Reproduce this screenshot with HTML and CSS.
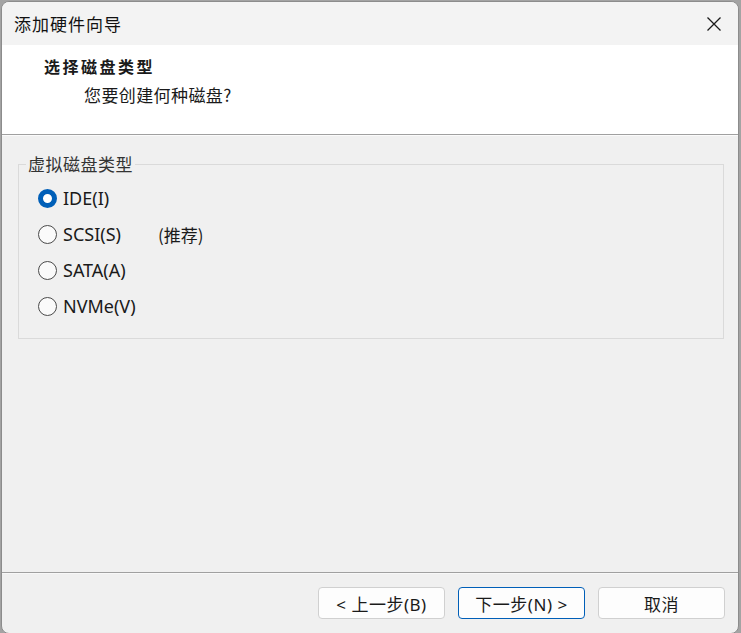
FILE: index.html
```html
<!DOCTYPE html>
<html lang="zh-CN">
<head>
    <meta charset="UTF-8">
    <title>添加硬件向导</title>
    <link rel="stylesheet" href="styles.css">
</head>
<body>
    <div class="window">
        <div class="titlebar">
            <span class="title">添加硬件向导</span>
            <span class="close">
                <svg width="16" height="16" viewBox="0 0 16 16"><path d="M1.5 1.5L14.5 14.5M14.5 1.5L1.5 14.5" stroke="#1a1a1a" stroke-width="1.3" fill="none"/></svg>
            </span>
        </div>

        <div class="header">
            <div class="head-title">选择磁盘类型</div>
            <div class="head-sub">您要创建何种磁盘?</div>
        </div>

        <div class="content">
            <fieldset class="group">
                <legend>虚拟磁盘类型</legend>
                <div class="options">
                    <label class="option"><span class="radio checked"></span>IDE(I)</label>
                    <label class="option"><span class="radio"></span>SCSI(S)<span class="hint">(推荐)</span></label>
                    <label class="option"><span class="radio"></span>SATA(A)</label>
                    <label class="option"><span class="radio"></span>NVMe(V)</label>
                </div>
            </fieldset>
        </div>

        <div class="footer">
            <button class="btn">&lt; 上一步(B)</button>
            <button class="btn default">下一步(N) &gt;</button>
            <button class="btn">取消</button>
        </div>
    </div>
</body>
</html>
```

FILE: styles.css
```css
html, body {
    margin: 0;
    height: 100%;
}

body {
    background-color: #a3a3a3;
    font-family: "Noto Sans", "Noto Sans CJK SC", sans-serif;
    color: #1a1a1a;
    padding: 1px 2px 1px 1px;
    box-sizing: border-box;
}

.window {
    height: 631px;
    border: 1px solid #8c8c8c;
    border-radius: 8px;
    overflow: hidden;
    display: flex;
    flex-direction: column;
    background-color: #f0f0f0;
}

.titlebar {
    height: 43px;
    flex: none;
    background-color: #f3f3f3;
    display: flex;
    align-items: center;
    justify-content: space-between;
    padding: 0 16px 0 12px;
}

.title {
    font-family: "Noto Sans CJK SC", sans-serif;
    font-size: 17px;
    letter-spacing: 1px;
    line-height: 22px;
    color: #111;
}

.close {
    display: flex;
}

.header {
    height: 90px;
    flex: none;
    background-color: #fff;
    border-bottom: 1px solid #a0a0a0;
    padding: 10px 0 0 42px;
    box-sizing: border-box;
}

.head-title {
    font-family: "Noto Sans CJK SC", sans-serif;
    font-weight: bold;
    font-size: 16px;
    letter-spacing: 2.5px;
    line-height: 22px;
}

.head-sub {
    font-family: "Noto Sans CJK SC", sans-serif;
    font-size: 17px;
    letter-spacing: 0.4px;
    line-height: 22px;
    margin: 7px 0 0 40px;
}

.content {
    flex: 1;
    padding: 18px 14px 0 16px;
    border-top: 1px solid #fbfbfb;
}

.group {
    margin: 0;
    border: 1px solid #dadada;
    padding: 0;
}

.group legend {
    font-family: "Noto Sans CJK SC", sans-serif;
    font-size: 17px;
    letter-spacing: 0.5px;
    line-height: 20px;
    color: #333;
    padding: 0 2px;
    margin-left: 7px;
}

.options {
    padding: 6px 0 14px 19px;
}

.option {
    display: flex;
    align-items: center;
    height: 36px;
    font-size: 18px;
}

.radio {
    width: 19px;
    height: 19px;
    border: 1px solid #4a4a4a;
    border-radius: 50%;
    box-sizing: border-box;
    margin-right: 6px;
    background-color: #fafafa;
}

.radio.checked {
    border: 5px solid #005fb8;
    background-color: #fff;
}

.hint {
    font-family: "Noto Sans CJK SC", sans-serif;
    font-size: 17px;
    margin-left: 37px;
}

.footer {
    height: 60px;
    flex: none;
    border-top: 1px solid #a0a0a0;
    display: flex;
    align-items: center;
    justify-content: flex-end;
    gap: 13px;
    padding-right: 13px;
    box-shadow: inset 0 1px 0 #f8f8f8;
}

.btn {
    width: 127px;
    height: 32px;
    background-color: #fdfdfd;
    border: 1px solid #d0d0d0;
    border-radius: 4px;
    font-family: "Noto Sans", "Noto Sans CJK SC", sans-serif;
    font-size: 17px;
    letter-spacing: 0.5px;
    color: #1a1a1a;
    padding: 0;
}

.btn.default {
    border-color: #005fb8;
}
```
